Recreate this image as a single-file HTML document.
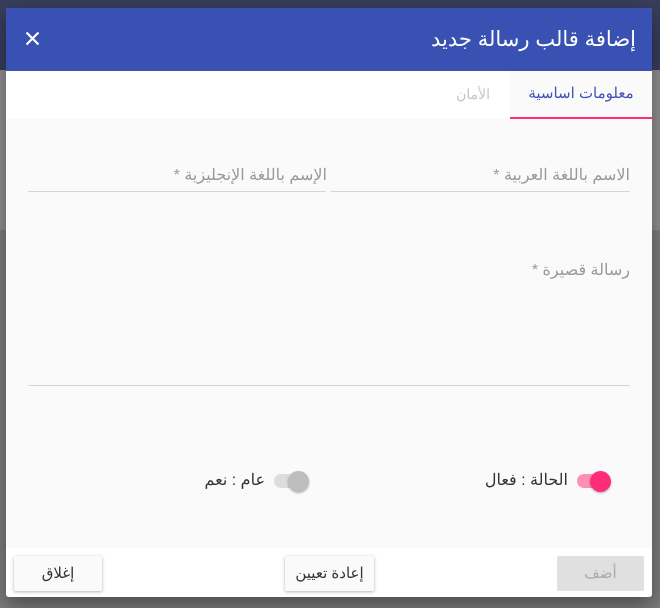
<!DOCTYPE html>
<html><head><meta charset="utf-8"><style>
*{margin:0;padding:0;box-sizing:border-box}
body{width:660px;height:608px;overflow:hidden;background:#7c7c7c;font-family:"Liberation Sans","Noto Sans CJK SC",sans-serif;position:relative}
.topbg{position:absolute;left:0;top:0;width:660px;height:70px;background:#383d5c}
.lstrip{position:absolute;left:0;top:70px;width:6px;height:160px;background:#8f8f8f}
.rstrip{position:absolute;right:0;top:70px;width:8px;height:160px;background:#8f8f8f}
.dlg{position:absolute;left:6px;top:8px;width:646px;height:589px;background:#fafafa;border-radius:3px;overflow:hidden;box-shadow:0 8px 20px rgba(0,0,0,.4)}
.hdr{height:63px;background:#3851b2;color:#fff;position:relative}
.hdr .t{position:absolute;right:16px;top:19px;font-size:21px}
.hdr .x{position:absolute;left:19px;top:23px}
.tabs{height:48px;background:#fff;position:relative}
.tab1{position:absolute;right:0;top:0;width:142px;height:48px;background:#fafafa;border-bottom:2px solid #ff2d78;color:#3f51b5;font-size:15px;text-align:center;line-height:46px}
.tab2{position:absolute;right:162px;top:0;height:48px;line-height:46px;color:#c4c4c4;font-size:14px}
.lbl{position:absolute;color:#999;font-size:16px;direction:rtl;white-space:nowrap}
.line{position:absolute;height:1px;background:#d5d5d5}
.ftr{position:absolute;left:0;bottom:0;width:646px;height:49px;background:#fff}
.btn{position:absolute;top:8px;height:35px;background:#fafafa;box-shadow:0 1px 3px rgba(0,0,0,.3);border-radius:2px;font-size:15px;color:#333;text-align:center;line-height:35px}
</style></head><body>
<div class="topbg"></div><div class="lstrip"></div><div class="rstrip"></div>
<div class="dlg">
 <div class="hdr"><div class="t">إضافة قالب رسالة جديد</div>
  <svg class="x" width="15" height="15" viewBox="0 0 15 15"><path d="M1.5 1.5L13.5 13.5M13.5 1.5L1.5 13.5" stroke="#fff" stroke-width="2.2"/></svg></div>
 <div class="tabs"><div class="tab1">معلومات اساسية</div><div class="tab2">الأمان</div></div>
 <div class="lbl" style="right:22px;top:157px">الاسم باللغة العربية *</div>
 <div class="line" style="left:325px;width:299px;top:183px"></div>
 <div class="lbl" style="right:325px;top:157px">الإسم باللغة الإنجليزية *</div>
 <div class="line" style="left:22px;width:298px;top:183px"></div>
 <div class="lbl" style="right:22px;top:252px">رسالة قصيرة *</div>
 <div class="line" style="left:22px;width:602px;top:377px"></div>
 <div style="position:absolute;left:571px;top:466px;width:28px;height:14px;border-radius:7px;background:#ff8fb3"></div>
 <div style="position:absolute;left:584px;top:463px;width:21px;height:21px;border-radius:50%;background:#ff2d78;box-shadow:0 1px 2px rgba(0,0,0,.3)"></div>
 <div class="lbl" style="right:84px;top:462px;color:#333">الحالة : فعال</div>
 <div style="position:absolute;left:268px;top:466px;width:28px;height:14px;border-radius:7px;background:#ddd"></div>
 <div style="position:absolute;left:282px;top:463px;width:21px;height:21px;border-radius:50%;background:#bdbdbd;box-shadow:0 1px 2px rgba(0,0,0,.3)"></div>
 <div class="lbl" style="right:387px;top:462px;color:#333">عام : نعم</div>
 <div class="ftr">
  <div class="btn" style="left:8px;width:88px">إغلاق</div>
  <div class="btn" style="left:279px;width:89px">إعادة تعيين</div>
  <div class="btn" style="left:551px;width:87px;background:#e0e0e0;box-shadow:none;color:#aaa">أضف</div>
 </div>
</div>
</body></html>
